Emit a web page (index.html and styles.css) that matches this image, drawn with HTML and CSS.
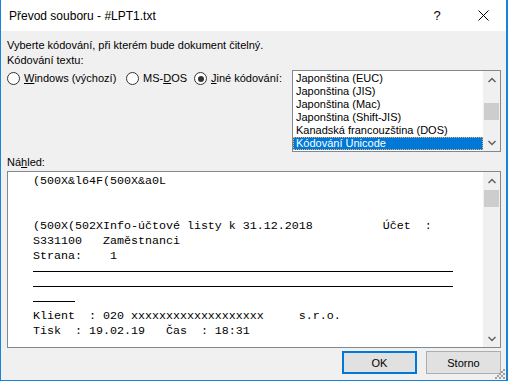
FILE: index.html
```html
<!DOCTYPE html>
<html lang="cs">

<head>
    <meta charset="UTF-8" />
    <title>Převod souboru - #LPT1.txt</title>
    <link rel="stylesheet" href="styles.css">
</head>

<body>

    <div class="window">
        <div class="titlebar">
            <div class="title">Převod souboru - #LPT1.txt</div>
            <div class="caption-btn help">?</div>
            <div class="caption-btn">
                <svg width="11" height="11" viewBox="0 0 11 11">
                    <path d="M0.5 0.5 L10.5 10.5 M10.5 0.5 L0.5 10.5" stroke="#000" stroke-width="1" fill="none" />
                </svg>
            </div>
        </div>

        <div class="content">
            <p>Vyberte kódování, při kterém bude dokument čitelný.</p>
            <p>Kódování textu:</p>

            <div class="encoding-row">
                <div class="radios">
                    <label class="radio radio-win"><span class="circle"></span><u>W</u>indows (výchozí)</label>
                    <label class="radio radio-dos"><span class="circle"></span>MS-<u>D</u>OS</label>
                    <label class="radio"><span class="circle checked"></span><u>J</u>iné kódování:</label>
                </div>

                <div class="listbox">
                    <ul class="list">
                        <li>Japonština (EUC)</li>
                        <li>Japonština (JIS)</li>
                        <li>Japonština (Mac)</li>
                        <li>Japonština (Shift-JIS)</li>
                        <li>Kanadská francouzština (DOS)</li>
                        <li class="selected">Kódování Unicode</li>
                    </ul>
                    <div class="scrollbar">
                        <div class="arrow">
                            <svg width="8" height="6" viewBox="0 0 8 6"><polyline points="0.5,5 4,1.5 7.5,5" stroke="#606060" stroke-width="1.5" fill="none" /></svg>
                        </div>
                        <div class="track track-list"><div class="thumb"></div></div>
                        <div class="arrow">
                            <svg width="8" height="6" viewBox="0 0 8 6"><polyline points="0.5,1 4,4.5 7.5,1" stroke="#606060" stroke-width="1.5" fill="none" /></svg>
                        </div>
                    </div>
                </div>
            </div>

            <p class="preview-label">Ná<u>h</u>led:</p>

            <div class="preview">
                <div class="preview-text">
                    <div class="line">(500X&amp;l64F(500X&amp;a0L</div>
                    <div class="line"></div>
                    <div class="line"></div>
                    <div class="line">(500X(502XInfo-účtové listy k 31.12.2018          Účet  :</div>
                    <div class="line">S331100   Zaměstnanci</div>
                    <div class="line">Strana:    1</div>
                    <div class="line rule"><span class="rule-long"></span></div>
                    <div class="line rule"><span class="rule-long"></span></div>
                    <div class="line rule"><span class="rule-short"></span></div>
                    <div class="line">Klient  : 020 xxxxxxxxxxxxxxxxxxx     s.r.o.</div>
                    <div class="line">Tisk  : 19.02.19   Čas  : 18:31</div>
                </div>
                <div class="scrollbar">
                    <div class="arrow">
                        <svg width="8" height="6" viewBox="0 0 8 6"><polyline points="0.5,5 4,1.5 7.5,5" stroke="#606060" stroke-width="1.5" fill="none" /></svg>
                    </div>
                    <div class="track track-preview"><div class="thumb"></div></div>
                    <div class="arrow">
                        <svg width="8" height="6" viewBox="0 0 8 6"><polyline points="0.5,1 4,4.5 7.5,1" stroke="#606060" stroke-width="1.5" fill="none" /></svg>
                    </div>
                </div>
            </div>

            <div class="buttons">
                <button class="btn btn-default">OK</button>
                <button class="btn">Storno</button>
            </div>
        </div>

        <svg class="grip" width="10" height="10" viewBox="0 0 10 10">
            <g fill="#a0a0a0">
                <rect x="8" y="0" width="2" height="2" />
                <rect x="6" y="2" width="2" height="2" />
                <rect x="8" y="4" width="2" height="2" />
                <rect x="4" y="4" width="2" height="2" />
                <rect x="2" y="6" width="2" height="2" />
                <rect x="6" y="6" width="2" height="2" />
                <rect x="0" y="8" width="2" height="2" />
                <rect x="4" y="8" width="2" height="2" />
                <rect x="8" y="8" width="2" height="2" />
            </g>
        </svg>
    </div>

</body>

</html>
```

FILE: styles.css
```css
* {
    box-sizing: border-box;
}

body {
    margin: 0;
    background: #fff;
    font-family: 'Liberation Sans', Arial, sans-serif;
    font-size: 11px;
    color: #000;
}

.window {
    position: relative;
    width: 508px;
    height: 381px;
    display: flex;
    flex-direction: column;
    background: #f0f0f0;
    border: 1px solid #1883d7;
    border-top: none;
    border-right-width: 2px;
}

/* title bar */

.titlebar {
    height: 31px;
    display: flex;
    align-items: center;
    background: #fff;
}

.title {
    flex: 1;
    padding-left: 8px;
    font-size: 12px;
}

.caption-btn {
    width: 46px;
    height: 31px;
    display: flex;
    align-items: center;
    justify-content: center;
}

.help {
    font-size: 13px;
}

/* dialog body */

.content {
    flex: 1;
    padding: 7px 5px 0 6px;
    line-height: 15px;
}

.content p {
    margin: 0;
}

.encoding-row {
    display: flex;
    align-items: flex-start;
    margin-top: 2px;
}

.radios {
    display: flex;
    margin-top: 1px;
}

.radio {
    display: flex;
    align-items: center;
}

.radio-win {
    width: 119px;
}

.radio-dos {
    width: 68px;
}

.circle {
    width: 13px;
    height: 13px;
    margin-right: 4px;
    border: 1px solid #333;
    border-radius: 50%;
    background: #fff;
    display: flex;
    align-items: center;
    justify-content: center;
}

.circle.checked::after {
    content: '';
    width: 6px;
    height: 6px;
    border-radius: 50%;
    background: #333;
}

.listbox {
    margin-left: auto;
    width: 209px;
    height: 82px;
    display: flex;
    border: 1px solid #828790;
    background: #fff;
}

.list {
    flex: 1;
    margin: 0;
    padding: 1px 0 0;
    list-style: none;
    line-height: 13px;
}

.list li {
    height: 13px;
    padding-left: 3px;
    white-space: nowrap;
}

.list li.selected {
    background: #0078d7;
    color: #fff;
    outline: 1px dotted #f5b056;
    outline-offset: -1px;
}

.scrollbar {
    width: 17px;
    display: flex;
    flex-direction: column;
    background: #f0f0f0;
}

.arrow {
    height: 17px;
    display: flex;
    align-items: center;
    justify-content: center;
}

.track {
    flex: 1;
    padding: 0 1px;
}

.track-list {
    padding-top: 15px;
}

.track-preview {
    padding-top: 1px;
}

.thumb {
    height: 17px;
    background: #cdcdcd;
}

.preview-label {
    margin-top: 3px !important;
}

.preview {
    width: 494px;
    height: 177px;
    margin-top: 1px;
    display: flex;
    border: 1px solid #828790;
    background: #fff;
}

.preview-text {
    flex: 1;
    padding: 2px 0 0 25px;
    font-family: 'Liberation Mono', 'Courier New', monospace;
    font-size: 11.66px;
    line-height: 15px;
    overflow: hidden;
}

.line {
    height: 15px;
    white-space: pre;
}

.rule span {
    display: block;
    height: 8px;
    border-bottom: 1px solid #000;
}

.rule-long {
    width: 420px;
}

.rule-short {
    width: 42px;
}

.buttons {
    display: flex;
    justify-content: flex-end;
    gap: 9px;
    margin-top: 3px;
}

.btn {
    width: 75px;
    height: 23px;
    padding: 0;
    border: 1px solid #adadad;
    background: #e1e1e1;
    font-family: inherit;
    font-size: 11px;
    color: #000;
}

.btn-default {
    border: 2px solid #0078d7;
}

.grip {
    position: absolute;
    right: 1px;
    bottom: 1px;
}
```
